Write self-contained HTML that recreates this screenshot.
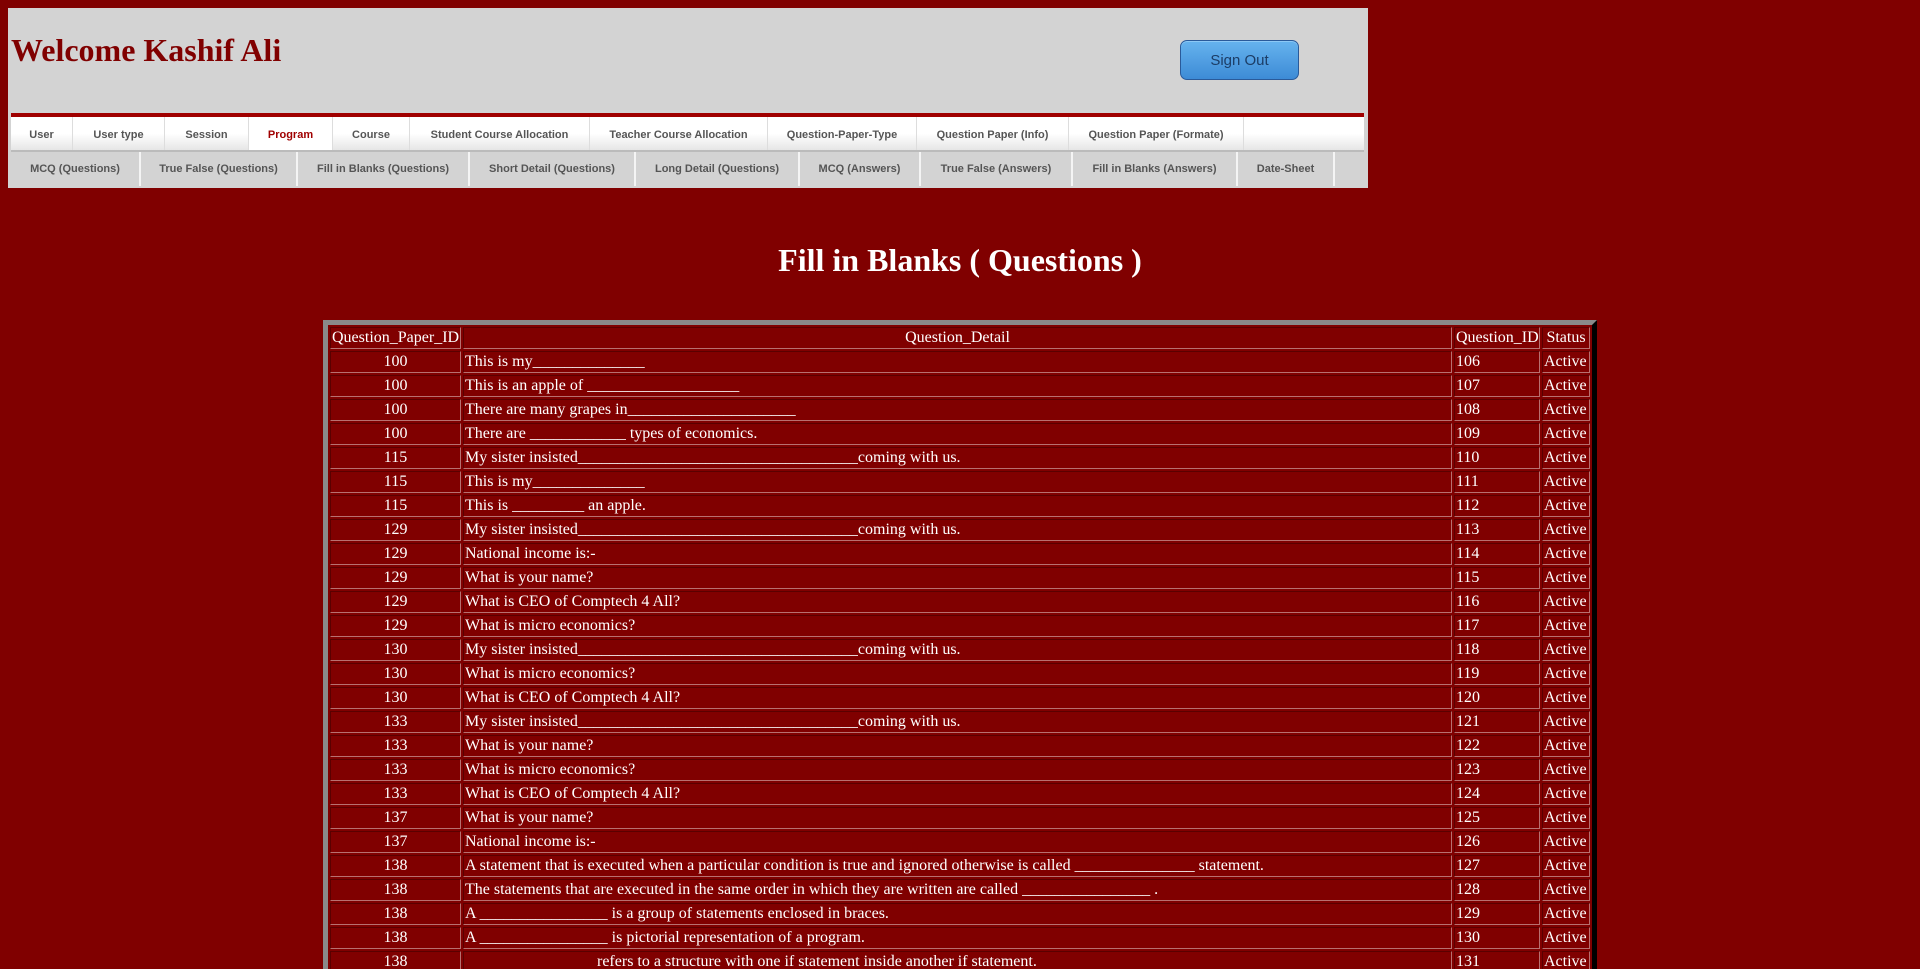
<!DOCTYPE html>
<html><head><meta charset="utf-8"><style>
html,body{margin:0;padding:0;background:#800000;width:1920px;height:969px;overflow:hidden}
.hdr{position:absolute;left:8px;top:8px;width:1360px;height:180px;background:#d3d3d3}
.title{position:absolute;left:3px;top:24px;font:bold 32px "Liberation Serif",serif;color:#800000;margin:0}
.btn{position:absolute;left:1172px;top:32px;width:117px;height:38px;border:1px solid #2a5a9a;border-radius:7px;background:linear-gradient(#66b3ee,#3d8bd6);font:15px "Liberation Sans",sans-serif;color:#1c3d66;text-align:center;line-height:40px;box-shadow:inset 0 1px 0 #8cc8f5}
.rl{position:absolute;left:3px;top:105px;width:1353px;height:4px;background:#a00000}
.m1,.m2{position:absolute;left:3px;width:1353px;display:flex;font:bold 11px "Liberation Sans",sans-serif;color:#555}
.m1{top:109px;height:33px;background:linear-gradient(#fff,#fff 50%,#e6e6e6)}
.m1 div{box-sizing:border-box;height:33px;line-height:36px;text-align:center;border-right:1px solid #ddd}
.m1 div.a{background:#fff;color:#a00000}
.m2{top:142px;height:2px;background:#bbb}
.m3{position:absolute;left:3px;top:144px;width:1353px;height:34px;display:flex;font:bold 11px "Liberation Sans",sans-serif;color:#555;background:#d3d3d3}
.m3 div{box-sizing:border-box;height:34px;line-height:34px;text-align:center;border-right:2px solid #f4f4f4}
h1{position:absolute;left:0;width:1920px;top:242px;margin:0;text-align:center;font:bold 32px "Liberation Serif",serif;color:#fff}
.wrap{position:absolute;left:0;top:0;width:1920px;height:969px;overflow:hidden}
table{position:absolute;left:323px;top:320px;width:1274px;table-layout:fixed;border-collapse:separate;border-spacing:2px;border:5px outset #8a8a8a;border-right-color:#3a3a3a;border-bottom-color:#3a3a3a;font:16px "Liberation Serif",serif;color:#fff}
td,th{border:1px solid #b87070;border-top-color:#5a0000;border-left-color:#5a0000;height:20px;line-height:20px;padding:0 1px;white-space:nowrap;overflow:hidden;font-weight:normal}
td.c{text-align:center}
.t{color:transparent}
</style></head><body>
<div class="hdr">
<div class="title">Welcome Kashif Ali</div>
<div class="btn">Sign Out</div>
<div class="rl"></div>
<div class="m1">
<div style="width:62px">User</div><div style="width:92px">User type</div><div style="width:84px">Session</div><div class="a" style="width:84px">Program</div><div style="width:77px">Course</div><div style="width:180px">Student Course Allocation</div><div style="width:178px">Teacher Course Allocation</div><div style="width:149px">Question-Paper-Type</div><div style="width:152px">Question Paper (Info)</div><div style="width:175px">Question Paper (Formate)</div><div style="width:120px;border:0"></div>
</div>
<div class="m2"></div>
<div class="m3">
<div style="width:130px">MCQ (Questions)</div><div style="width:157px">True False (Questions)</div><div style="width:172px">Fill in Blanks (Questions)</div><div style="width:166px">Short Detail (Questions)</div><div style="width:164px">Long Detail (Questions)</div><div style="width:121px">MCQ (Answers)</div><div style="width:152px">True False (Answers)</div><div style="width:165px">Fill in Blanks (Answers)</div><div style="width:97px">Date-Sheet</div><div style="width:29px;border:0"></div>
</div>
</div>
<h1>Fill in Blanks ( Questions )</h1>
<div class="wrap">
<table>
<colgroup><col style="width:131px"><col style="width:989px"><col style="width:86px"><col style="width:48px"></colgroup>
<tr><th>Question_Paper_ID</th><th>Question_Detail</th><th>Question_ID</th><th>Status</th></tr>
<tr><td class="c">100</td><td>This is my______________</td><td>106</td><td>Active</td></tr>
<tr><td class="c">100</td><td>This is an apple of ___________________</td><td>107</td><td>Active</td></tr>
<tr><td class="c">100</td><td>There are many grapes in_____________________</td><td>108</td><td>Active</td></tr>
<tr><td class="c">100</td><td>There are ____________ types of economics.</td><td>109</td><td>Active</td></tr>
<tr><td class="c">115</td><td>My sister insisted___________________________________coming with us.</td><td>110</td><td>Active</td></tr>
<tr><td class="c">115</td><td>This is my______________</td><td>111</td><td>Active</td></tr>
<tr><td class="c">115</td><td>This is _________ an apple.</td><td>112</td><td>Active</td></tr>
<tr><td class="c">129</td><td>My sister insisted___________________________________coming with us.</td><td>113</td><td>Active</td></tr>
<tr><td class="c">129</td><td>National income is:-</td><td>114</td><td>Active</td></tr>
<tr><td class="c">129</td><td>What is your name?</td><td>115</td><td>Active</td></tr>
<tr><td class="c">129</td><td>What is CEO of Comptech 4 All?</td><td>116</td><td>Active</td></tr>
<tr><td class="c">129</td><td>What is micro economics?</td><td>117</td><td>Active</td></tr>
<tr><td class="c">130</td><td>My sister insisted___________________________________coming with us.</td><td>118</td><td>Active</td></tr>
<tr><td class="c">130</td><td>What is micro economics?</td><td>119</td><td>Active</td></tr>
<tr><td class="c">130</td><td>What is CEO of Comptech 4 All?</td><td>120</td><td>Active</td></tr>
<tr><td class="c">133</td><td>My sister insisted___________________________________coming with us.</td><td>121</td><td>Active</td></tr>
<tr><td class="c">133</td><td>What is your name?</td><td>122</td><td>Active</td></tr>
<tr><td class="c">133</td><td>What is micro economics?</td><td>123</td><td>Active</td></tr>
<tr><td class="c">133</td><td>What is CEO of Comptech 4 All?</td><td>124</td><td>Active</td></tr>
<tr><td class="c">137</td><td>What is your name?</td><td>125</td><td>Active</td></tr>
<tr><td class="c">137</td><td>National income is:-</td><td>126</td><td>Active</td></tr>
<tr><td class="c">138</td><td>A statement that is executed when a particular condition is true and ignored otherwise is called _______________ statement.</td><td>127</td><td>Active</td></tr>
<tr><td class="c">138</td><td>The statements that are executed in the same order in which they are written are called ________________ .</td><td>128</td><td>Active</td></tr>
<tr><td class="c">138</td><td>A ________________ is a group of statements enclosed in braces.</td><td>129</td><td>Active</td></tr>
<tr><td class="c">138</td><td>A ________________ is pictorial representation of a program.</td><td>130</td><td>Active</td></tr>
<tr><td class="c">138</td><td><span class="t">________________</span> refers to a structure with one if statement inside another if statement.</td><td>131</td><td>Active</td></tr>
</table>
</div>
</body></html>
